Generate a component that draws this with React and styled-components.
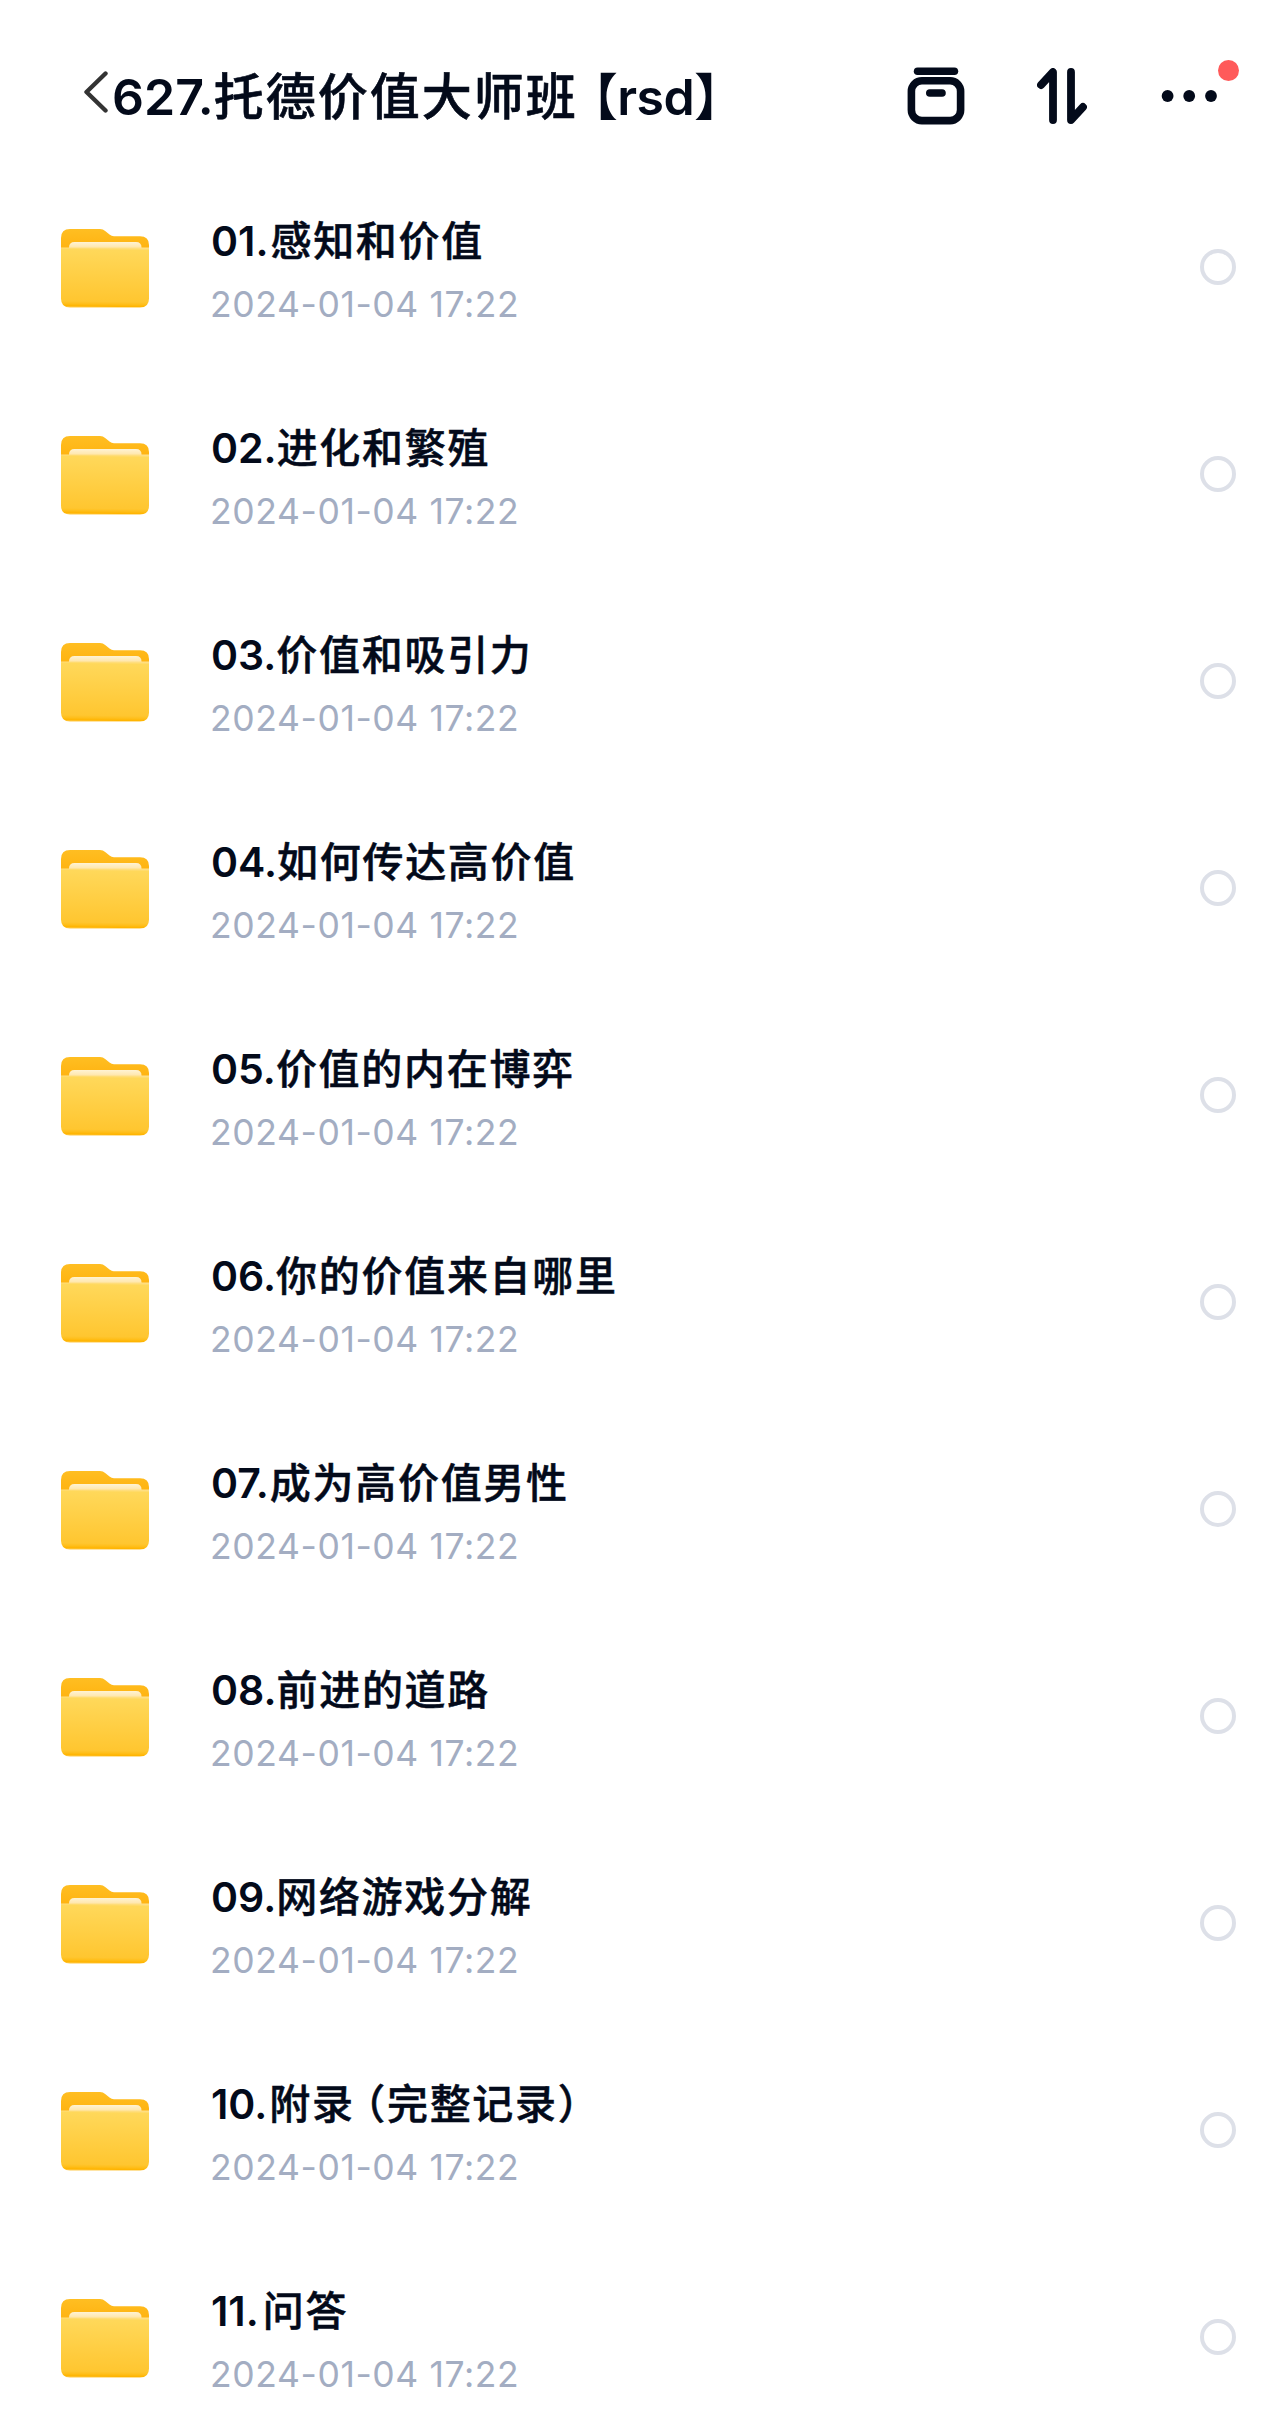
import styled, { createGlobalStyle } from "styled-components";

const folders = [
  { no: "01.", gap: 2, name: "感知和价值" },
  { no: "02.", gap: 0, name: "进化和繁殖" },
  { no: "03.", gap: 0, name: "价值和吸引力" },
  { no: "04.", gap: 0, name: "如何传达高价值" },
  { no: "05.", gap: 0, name: "价值的内在博弈" },
  { no: "06.", gap: 0, name: "你的价值来自哪里" },
  { no: "07.", gap: 1, name: "成为高价值男性" },
  { no: "08.", gap: 0, name: "前进的道路" },
  { no: "09.", gap: 0, name: "网络游戏分解" },
  { no: "10.", gap: 2, name: "附录", note: "（完整记录）" },
  { no: "11.", gap: 4, name: "问答" },
];

const date = "2024-01-04 17:22";

export default function App() {
  return (
    <Page>
      <GlobalStyle />
      <Header>
        <BackButton aria-label="返回">
          <BackIcon />
        </BackButton>
        <Title>
          <TitleLatin>627.</TitleLatin>
          <TitleText>托德价值大师班</TitleText>
          <TitleTag>【rsd】</TitleTag>
        </Title>
        <Actions>
          <BoxIcon />
          <SortIcon />
          <MoreButton aria-label="更多">
            <MoreIcon />
            <Badge />
          </MoreButton>
        </Actions>
      </Header>

      <List>
        {folders.map((folder) => (
          <Row key={folder.no}>
            <FolderIcon />
            <Info>
              <Name>
                <Number $gap={folder.gap}>{folder.no}</Number>
                {folder.name}
                {folder.note && <Note>{folder.note}</Note>}
              </Name>
              <DateText>{date}</DateText>
            </Info>
            <Radio />
          </Row>
        ))}
      </List>

      <FolderDefs />
    </Page>
  );
}

function BackIcon() {
  return (
    <svg width="28" height="46" viewBox="0 0 28 46" fill="none">
      <path
        d="M25.5 4.5L6.5 23L25.5 41.5"
        stroke="#333333"
        strokeWidth="4.4"
        strokeLinecap="round"
        strokeLinejoin="round"
      />
    </svg>
  );
}

function BoxIcon() {
  return (
    <svg width="58" height="58" viewBox="0 0 58 58" fill="none">
      <g stroke="#030a1a" strokeWidth="7.6" strokeLinecap="round">
        <path d="M10.6 4.3H47.4" />
        <rect x="4.4" y="13.8" width="49.2" height="39.8" rx="10.5" />
        <path d="M22.8 26H35" />
      </g>
    </svg>
  );
}

function SortIcon() {
  return (
    <svg width="50" height="56" viewBox="0 0 50 56" fill="none">
      <g
        stroke="#030a1a"
        strokeWidth="7.8"
        strokeLinecap="round"
        strokeLinejoin="round"
      >
        <path d="M4 17L16 4V52" />
        <path d="M34 4V52L46 39" />
      </g>
    </svg>
  );
}

function MoreIcon() {
  return (
    <svg width="56" height="12" viewBox="0 0 56 12" fill="#030a1a">
      <circle cx="6.6" cy="6" r="5.9" />
      <circle cx="28.2" cy="6" r="5.9" />
      <circle cx="50" cy="6" r="5.9" />
    </svg>
  );
}

function FolderIcon() {
  return (
    <FolderSvg width="88" height="79" viewBox="0 0 88 79">
      <path
        d="M0 9Q0 0 9 0H39Q42 0 44.5 2.2L48.5 5.6Q50.5 7.2 53 7.2H79Q88 7.2 88 16V40H0Z"
        fill="url(#folderBack)"
      />
      <path
        d="M8 20V18.5Q8 13 13.5 13H75Q80.5 13 80.5 18.5V20Z"
        fill="url(#folderPaper)"
      />
      <path
        d="M0 18.5H88V69.5Q88 78.5 79 78.5H9Q0 78.5 0 69.5Z"
        fill="url(#folderFront)"
      />
    </FolderSvg>
  );
}

// gradients shared by every folder icon
function FolderDefs() {
  return (
    <Defs width="0" height="0">
      <defs>
        <linearGradient id="folderBack" x1="0" y1="0" x2="0" y2="1">
          <stop offset="0" stopColor="#ffbe22" />
          <stop offset="0.5" stopColor="#ffb310" />
        </linearGradient>
        <linearGradient id="folderPaper" x1="0" y1="0" x2="0" y2="1">
          <stop offset="0" stopColor="#fff3d4" />
          <stop offset="1" stopColor="#ffe3a0" />
        </linearGradient>
        <linearGradient id="folderFront" x1="0.51" y1="0" x2="0.49" y2="1">
          <stop offset="0" stopColor="#ffe08a" />
          <stop offset="0.04" stopColor="#ffd85a" />
          <stop offset="0.9" stopColor="#ffc630" />
          <stop offset="0.94" stopColor="#ffbf1c" />
          <stop offset="0.98" stopColor="#ffb400" />
          <stop offset="1" stopColor="#ffc94a" />
        </linearGradient>
      </defs>
    </Defs>
  );
}

const GlobalStyle = createGlobalStyle`
  * {
    box-sizing: border-box;
  }

  body {
    margin: 0;
    background: #ffffff;
  }
`;

const Page = styled.main`
  width: 1284px;
  height: 2418px;
  overflow: hidden;
  background: #ffffff;
  color: #030a1a;
  font-family: Inter, "Noto Sans CJK SC", sans-serif;
`;

const Header = styled.header`
  display: flex;
  align-items: center;
  height: 164px;
  padding: 28px 67px 0 80px;
`;

const BackButton = styled.button`
  display: flex;
  margin: -9px 0 0;
  padding: 0;
  border: 0;
  background: none;
`;

const Title = styled.h1`
  display: flex;
  align-items: baseline;
  margin: 1px auto 0 4px;
  font-size: 50px;
  line-height: 68px;
  font-weight: 500;
  white-space: nowrap;
`;

const TitleLatin = styled.span`
  font-weight: 600;
`;

const TitleText = styled.span`
  letter-spacing: 2px;
  -webkit-text-stroke: 0.6px currentColor;
`;

const TitleTag = styled.span`
  margin-left: 15px;
  font-weight: 600;
  letter-spacing: -0.5px;
  font-feature-settings: "halt";
`;

const Actions = styled.div`
  display: flex;
  align-items: center;
  gap: 72px;
`;

const MoreButton = styled.div`
  position: relative;
  display: flex;
  margin-left: 2px;
`;

const Badge = styled.span`
  position: absolute;
  top: -30px;
  right: -22px;
  width: 21px;
  height: 21px;
  border-radius: 50%;
  background: #ff5a5a;
`;

const List = styled.ul`
  margin: -1px 0 0;
  padding: 0;
  list-style: none;
`;

const Row = styled.li`
  display: flex;
  align-items: center;
  height: 207px;
  padding: 0 48px 0 61px;
`;

const FolderSvg = styled.svg`
  display: block;
  margin-top: 4px;
`;

const Info = styled.div`
  flex: 1;
  margin: 7px 0 0 62px;
`;

const Name = styled.div`
  font-size: 41px;
  line-height: 60px;
  font-weight: 500;
  letter-spacing: 1.7px;
  white-space: nowrap;
  -webkit-text-stroke: 0.5px currentColor;
`;

const Number = styled.span`
  margin-right: ${({ $gap }) => $gap}px;
  font-weight: 600;
  letter-spacing: 0;
  -webkit-text-stroke: 0;
`;

const Note = styled.span`
  margin-left: 10px;
  font-feature-settings: "halt";
`;

const DateText = styled.div`
  margin: 9px 0 0 -1px;
  color: #a3adc2;
  font-size: 35.5px;
  line-height: 50px;
  letter-spacing: 0.6px;
  white-space: nowrap;
`;

const Radio = styled.span`
  width: 36px;
  height: 36px;
  border: 4px solid #dde0e8;
  border-radius: 50%;
`;

const Defs = styled.svg`
  position: absolute;
`;
